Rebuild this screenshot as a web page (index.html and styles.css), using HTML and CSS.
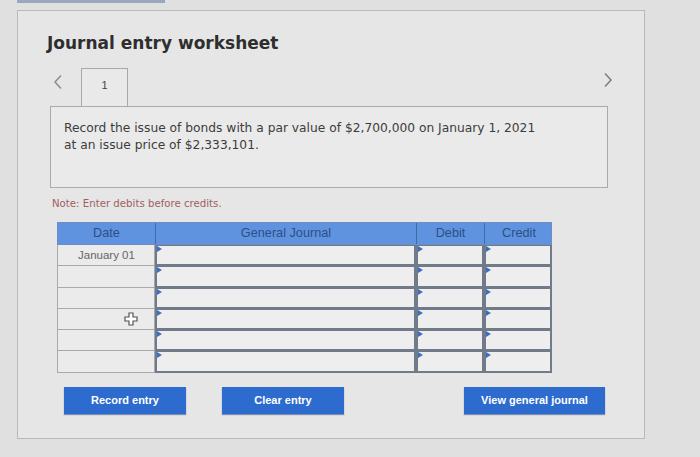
FILE: index.html
```html
<!DOCTYPE html>
<html>
<head>
<meta charset="utf-8">
<link rel="stylesheet" href="styles.css">
</head>
<body>
<div class="topbar"></div>
<div class="panel">
  <h1 class="title">Journal entry worksheet</h1>
  <div class="tabs">
    <svg class="chev left" width="12" height="16" viewBox="0 0 12 16"><path d="M9 1.5L3 8l6 6.5" fill="none" stroke="#8c8c8c" stroke-width="1.5"/></svg>
    <div class="tab">1</div>
    <span class="spacer"></span>
    <svg class="chev right" width="12" height="16" viewBox="0 0 12 16"><path d="M3 1.5L9 8l-6 6.5" fill="none" stroke="#7c7c7c" stroke-width="1.5"/></svg>
  </div>
  <div class="question">Record the issue of bonds with a par value of $2,700,000 on January 1, 2021<br>at an issue price of $2,333,101.</div>
  <div class="note">Note: Enter debits before credits.</div>
  <div class="table">
    <div class="hrow">
      <div class="th">Date</div>
      <div class="th">General Journal</div>
      <div class="th">Debit</div>
      <div class="th">Credit</div>
    </div>
    <div class="row">
      <div class="date">January 01</div>
      <div class="cell"></div><div class="cell"></div><div class="cell"></div>
    </div>
    <div class="row">
      <div class="date"></div>
      <div class="cell"></div><div class="cell"></div><div class="cell"></div>
    </div>
    <div class="row">
      <div class="date"></div>
      <div class="cell"></div><div class="cell"></div><div class="cell"></div>
    </div>
    <div class="row">
      <div class="date cursor-cell">
        <svg class="cursor" width="14" height="14" viewBox="0 0 14 14"><path d="M5 1h4v4h4v4h-4v4h-4v-4h-4v-4h4z" fill="#fff" stroke="#555" stroke-width="1.2"/></svg>
      </div>
      <div class="cell"></div><div class="cell"></div><div class="cell"></div>
    </div>
    <div class="row">
      <div class="date"></div>
      <div class="cell"></div><div class="cell"></div><div class="cell"></div>
    </div>
    <div class="row">
      <div class="date"></div>
      <div class="cell"></div><div class="cell"></div><div class="cell"></div>
    </div>
  </div>
  <div class="buttons">
    <button class="btn b1">Record entry</button>
    <button class="btn b2">Clear entry</button>
    <span class="spacer"></span>
    <button class="btn b3">View general journal</button>
  </div>
</div>
</body>
</html>
```
FILE: styles.css
```css
html, body {
  margin: 0;
  padding: 0;
}
body {
  width: 700px;
  height: 457px;
  overflow: hidden;
  background: #e0e0e0;
  font-family: "DejaVu Sans", Verdana, sans-serif;
}
.topbar {
  margin-left: 17px;
  width: 148px;
  height: 3px;
  background: #9aa8bd;
}
.panel {
  margin: 7px 0 0 17px;
  width: 628px;
  height: 429px;
  box-sizing: border-box;
  border: 1px solid #b9b9b9;
  background: #e6e6e6;
  padding: 20px 0 0 32px;
}
.title {
  margin: 0;
  font-size: 17px;
  font-weight: bold;
  color: #2e2e2e;
  line-height: 24px;
  margin-left: -3px;
}
.tabs {
  display: flex;
  align-items: flex-end;
  height: 38px;
  margin-top: 13px;
  width: 558px;
}
.chev {
  align-self: flex-start;
  margin-top: 6px;
}
.chev.left {
  margin-left: 2px;
  margin-right: 17px;
}
.chev.right {
  margin-top: 4px;
  margin-right: -6px;
}
.tab {
  width: 47px;
  height: 38px;
  box-sizing: border-box;
  border: 1px solid #a8a8a8;
  border-bottom: none;
  background: #e9e9e9;
  font-family: "Liberation Sans", Arial, sans-serif;
  font-size: 11px;
  color: #444;
  text-align: center;
  padding-top: 10px;
}
.spacer { flex: 1; }
.question {
  width: 558px;
  height: 82px;
  box-sizing: border-box;
  border: 1px solid #aaaaaa;
  background: #eaeaea;
  padding: 13px 0 0 13px;
  font-size: 12.25px;
  line-height: 17px;
  color: #3c3c3c;
}
.note {
  margin: 10px 0 0 2px;
  font-size: 10.2px;
  color: #a06060;
}
.table {
  margin: 13px 0 0 7px;
  width: 495px;
}
.hrow, .row {
  display: grid;
  grid-template-columns: 98px 261px 68px 68px;
}
.hrow {
  height: 23px;
  background: #5f93df;
  border: 1px solid #6b8fc0;
  box-sizing: border-box;
}
.th {
  font-family: "Liberation Sans", Arial, sans-serif;
  font-size: 12.7px;
  color: #2c4f86;
  text-align: center;
  line-height: 21px;
  border-right: 1px solid #3f6aa8;
}
.th:last-child { border-right: none; }
.row {
  height: 21.3px;
}
.date {
  box-sizing: border-box;
  border: 1px solid #a9a9a9;
  border-top: none;
  background: #ebebeb;
  font-family: "Liberation Sans", Arial, sans-serif;
  font-size: 11.5px;
  color: #666;
  line-height: 20px;
  padding-left: 20px;
}
.cursor-cell {
  position: relative;
}
.cursor {
  position: absolute;
  left: 66px;
  top: 3px;
}
.cell {
  position: relative;
  box-sizing: border-box;
  border: 2px solid #707a88;
  border-top: 1px solid #707a88;
  background: #eeeeee;
}
.cell::before {
  content: "";
  position: absolute;
  left: 0;
  top: 0;
  border-style: solid;
  border-width: 3px 0 3px 5px;
  border-color: transparent transparent transparent #3b6fc2;
}
.buttons {
  display: flex;
  width: 541px;
  margin: 14px 0 0 14px;
  gap: 36px;
}
.btn {
  height: 27px;
  border: none;
  background: #2d6bcf;
  color: #fff;
  font-family: "Liberation Sans", Arial, sans-serif;
  font-weight: bold;
  font-size: 11px;
  padding: 0;
  box-shadow: 0 1px 1px #7b8fb0;
}
.b1, .b2 { width: 122px; }
.b3 { width: 141px; }
```
